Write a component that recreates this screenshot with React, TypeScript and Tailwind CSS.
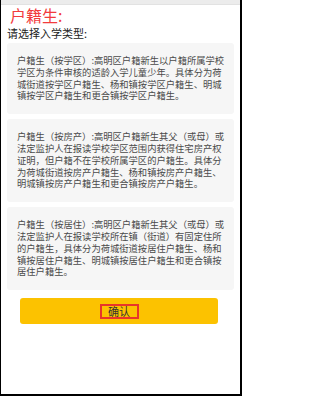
import React from "react";

const cards = [
  "户籍生（按学区）:高明区户籍新生以户籍所属学校学区为条件审核的适龄入学儿童少年。具体分为荷城街道按学区户籍生、杨和镇按学区户籍生、明城镇按学区户籍生和更合镇按学区户籍生。",
  "户籍生（按房产）:高明区户籍新生其父（或母）或法定监护人在报读学校学区范围内获得住宅房产权证明，但户籍不在学校所属学区的户籍生。具体分为荷城街道按房产户籍生、杨和镇按房产户籍生、明城镇按房产户籍生和更合镇按房产户籍生。",
  "户籍生（按居住）:高明区户籍新生其父（或母）或法定监护人在报读学校所在镇（街道）有固定住所的户籍生，具体分为荷城街道按居住户籍生、杨和镇按居住户籍生、明城镇按居住户籍生和更合镇按居住户籍生。",
];

export default function App() {
  return (
    <div
      className="w-[243px] h-[398px] bg-white overflow-hidden"
      style={{ fontFamily: '"Noto Sans CJK SC", "Noto Sans", sans-serif' }}
    >
      <div className="w-[242px] h-[396px] border-l border-r-2 border-b-2 border-black flex flex-col">
        <div className="h-[5px] bg-[#ececec] border-b border-[#e2e2e2]" />
        <div className="pl-[9px] text-[16px] leading-[20px] text-[#f23b3d]">
          户籍生:
        </div>
        <div className="pl-[6px] text-[11px] leading-[14px] text-[#222] mt-[1px]">
          请选择入学类型:
        </div>
        <div className="flex flex-col gap-[5px] mt-[3px] ml-[6px] w-[227px]">
          {cards.map((t, i) => (
            <div
              key={i}
              className="bg-[#f6f6f6] rounded-[3px] pl-[10px] pr-[8px] pt-[12px] pb-[12px] text-[9.3px] leading-[11.8px] text-[#4a4a4a]"
            >
              {t}
            </div>
          ))}
        </div>
        <div className="mt-[8px] ml-[19px] w-[198px] h-[26px] bg-[#fcc200] rounded-[3px] flex items-center justify-center">
          <span className="border-2 border-[#e8352a] w-[39px] h-[15px] flex items-center justify-center text-[11px] leading-[11px] text-[#333]">
            确认
          </span>
        </div>
      </div>
    </div>
  );
}
